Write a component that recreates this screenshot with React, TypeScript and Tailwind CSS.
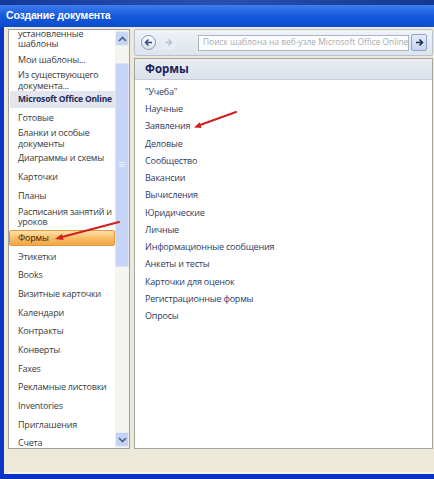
type NavItem = {
  label: string;
  cls: string;
  kind?: "section" | "active";
};

const leftItems: NavItem[] = [
  { label: "установленные\nшаблоны", cls: "h-[22px] -mt-[2px] leading-[10px]" },
  { label: "Мои шаблоны...", cls: "h-[19px]" },
  { label: "Из существующего\nдокумента...", cls: "h-[22px] leading-[11px]" },
  { label: "Microsoft Office Online", cls: "h-[17px]", kind: "section" },
  { label: "Готовые", cls: "h-[19px]" },
  { label: "Бланки и особые\nдокументы", cls: "h-[22px] leading-[11px]" },
  { label: "Диаграммы и схемы", cls: "h-[18px]" },
  { label: "Карточки", cls: "h-[19px]" },
  { label: "Планы", cls: "h-[19px]" },
  { label: "Расписания занятий и\nуроков", cls: "h-[23px] leading-[10px]" },
  { label: "Формы", cls: "h-[19px]", kind: "active" },
  { label: "Этикетки", cls: "h-[18.7px]" },
  { label: "Books", cls: "h-[18.7px]" },
  { label: "Визитные карточки", cls: "h-[18.7px]" },
  { label: "Календари", cls: "h-[18.7px]" },
  { label: "Контракты", cls: "h-[18.7px]" },
  { label: "Конверты", cls: "h-[18.7px]" },
  { label: "Faxes", cls: "h-[18.7px]" },
  { label: "Рекламные листовки", cls: "h-[18.7px]" },
  { label: "Inventories", cls: "h-[18.7px]" },
  { label: "Приглашения", cls: "h-[18.7px]" },
  { label: "Счета", cls: "h-[18.7px]" },
];

const formTemplates = [
  "\"Учеба\"",
  "Научные",
  "Заявления",
  "Деловые",
  "Сообщество",
  "Вакансии",
  "Вычисления",
  "Юридические",
  "Личные",
  "Информационные сообщения",
  "Анкеты и тесты",
  "Карточки для оценок",
  "Регистрационные формы",
  "Опросы",
];

const uiFont = { fontFamily: "'Open Sans', 'Noto Sans', sans-serif" };

function Chevron({ up }: { up?: boolean }) {
  return (
    <svg width="9" height="6" viewBox="0 0 9 6">
      <path
        d={up ? "M1 5 L4.5 1.5 L8 5" : "M1 1 L4.5 4.5 L8 1"}
        fill="none"
        stroke="#4d6185"
        strokeWidth="1.6"
      />
    </svg>
  );
}

function NavRow({ item }: { item: NavItem }) {
  if (item.kind === "active") {
    return (
      <div className={`${item.cls} pt-[2px] pb-[1px]`}>
        <div className="flex h-full items-center whitespace-nowrap rounded-[2px] border border-[#e29a3a] bg-gradient-to-b from-[#fde3ae] via-[#f8bd66] to-[#f4a646] pl-[8px] text-[9px] tracking-[-0.2px] text-[#3a2a10]">
          {item.label}
        </div>
      </div>
    );
  }
  if (item.kind === "section") {
    return (
      <div
        className={`${item.cls} ml-[1px] flex items-center whitespace-nowrap bg-[#e2e5ed] pl-[8px] text-[8.5px] font-bold tracking-[-0.2px] text-[#1f2b58]`}
      >
        {item.label}
      </div>
    );
  }
  return (
    <div
      className={`${item.cls} flex items-center whitespace-pre pl-[9px] text-[9px] tracking-[-0.2px] text-[#3b3b3b]`}
    >
      <span>{item.label}</span>
    </div>
  );
}

function Scrollbar() {
  return (
    <div className="flex w-[14px] flex-col bg-[#f4f4f1] pt-[1px]">
      <div className="flex h-[15px] items-center justify-center rounded-[2px] border border-[#e6ecf8] bg-[#c9d6f3]">
        <Chevron up />
      </div>
      <div className="h-[17px]" />
      <div className="relative h-[204px] rounded-[2px] border border-[#dbe3f6] bg-[#c6d4f6]">
        <div className="absolute left-[3px] top-[98px] flex w-[6px] flex-col gap-[1px]">
          <div className="h-px bg-[#e8eefc]" />
          <div className="h-px bg-[#e8eefc]" />
          <div className="h-px bg-[#e8eefc]" />
        </div>
      </div>
      <div className="flex-1" />
      <div className="mb-[1px] flex h-[15px] items-center justify-center rounded-[2px] border border-[#e6ecf8] bg-[#c4d3f4]">
        <Chevron />
      </div>
    </div>
  );
}

function Toolbar() {
  return (
    <div className="flex h-[27px] items-center rounded-[2px] border border-[#b7c1d1] bg-gradient-to-b from-[#eff2f7] to-[#dee4ee] pl-[6px] pr-[5px]">
      <div className="flex h-[15px] w-[15px] items-center justify-center rounded-full border border-[#8696b6] bg-gradient-to-b from-white to-[#dbe3f0]">
        <svg width="9" height="9" viewBox="0 0 9 9">
          <path d="M8 4.5 H1.5 M4.5 1.5 L1.5 4.5 L4.5 7.5" fill="none" stroke="#2e4a86" strokeWidth="1.5" />
        </svg>
      </div>
      <div className="ml-[5px] flex h-[15px] w-[15px] items-center justify-center rounded-full bg-[#e9edf4]">
        <svg width="9" height="9" viewBox="0 0 9 9">
          <path d="M1 4.5 H7.5 M4.5 1.5 L7.5 4.5 L4.5 7.5" fill="none" stroke="#b6c0d2" strokeWidth="1.5" />
        </svg>
      </div>
      <div className="ml-[22px] flex h-[16px] w-[211px] items-center overflow-hidden whitespace-nowrap border border-[#a9b5c8] bg-white pl-[4px] text-[8.4px] text-[#a3a9b3]">
        Поиск шаблона на веб-узле Microsoft Office Online
      </div>
      <div className="ml-[2px] flex h-[17px] w-[16px] items-center justify-center rounded-[2px] border border-[#8ea4c8] bg-gradient-to-b from-[#e3ebf8] to-[#c6d5ee]">
        <svg width="9" height="9" viewBox="0 0 9 9">
          <path d="M1 4.5 H7.5 M4.5 1.5 L7.5 4.5 L4.5 7.5" fill="none" stroke="#1e2e55" strokeWidth="1.6" />
        </svg>
      </div>
    </div>
  );
}

export default function App() {
  return (
    <div className="relative h-[479px] w-[434px] overflow-hidden bg-[#0b36c8]" style={uiFont}>
      {/* strip of the window behind */}
      <div className="h-[5px] bg-gradient-to-r from-[#163a98] via-[#2a4fae] to-[#143892]" />

      {/* title bar */}
      <div className="flex h-[22px] items-center bg-gradient-to-b from-[#3d7df0] via-[#1559dc] to-[#0b4ccd] pl-[6px]">
        <span
          className="text-[10.5px] font-bold tracking-[-0.2px] text-white"
          style={{ fontFamily: "'Liberation Sans', Arial, sans-serif" }}
        >
          Создание документа
        </span>
      </div>

      {/* dialog body */}
      <div className="flex h-[447px] pl-[4px]">
        <div className="flex flex-1 flex-col bg-[#ece9d8] pl-[4px] pt-[2px]">
          <div className="flex h-[420px] gap-[4px] pr-[2px]">
            {/* category pane */}
            <div className="flex w-[122px] border border-[#9e9e9a] bg-white">
              <div className="flex-1 overflow-hidden">
                {leftItems.map((item) => (
                  <NavRow key={item.label} item={item} />
                ))}
              </div>
              <Scrollbar />
            </div>

            {/* template pane */}
            <div className="flex flex-1 flex-col">
              <Toolbar />
              <div className="mt-[2px] flex flex-1 flex-col border border-[#a4a4a0] bg-white">
                <div className="flex h-[21px] items-center border-b border-[#c7cdd8] bg-gradient-to-b from-[#e9ecf2] to-[#dde2eb] pl-[10px] text-[11.5px] font-bold text-[#17235a]">
                  Формы
                </div>
                <div className="pt-[3px]">
                  {formTemplates.map((name) => (
                    <div
                      key={name}
                      className="flex h-[17.25px] items-center pl-[10px] text-[9px] tracking-[-0.2px] text-[#2c3b62]"
                    >
                      {name}
                    </div>
                  ))}
                </div>
              </div>
            </div>
          </div>
          <div className="flex-1" />
          <div className="h-[2px] bg-[#f6f4ea]" />
        </div>
      </div>

      {/* bottom frame */}
      <div className="h-[5px] bg-[#0a32c2]" />

      {/* red pointer arrows */}
      <svg className="pointer-events-none absolute left-0 top-0" width="434" height="479" viewBox="0 0 434 479">
        <line x1="119" y1="222" x2="62" y2="237" stroke="#d21f1f" strokeWidth="2" strokeLinecap="round" />
        <polygon points="55,239 63.5,240 61.9,234" fill="#d21f1f" />
        <line x1="236" y1="112" x2="200" y2="125" stroke="#d21f1f" strokeWidth="2" strokeLinecap="round" />
        <polygon points="194,127.5 201.5,127.9 199.7,122.3" fill="#d21f1f" />
      </svg>
    </div>
  );
}
